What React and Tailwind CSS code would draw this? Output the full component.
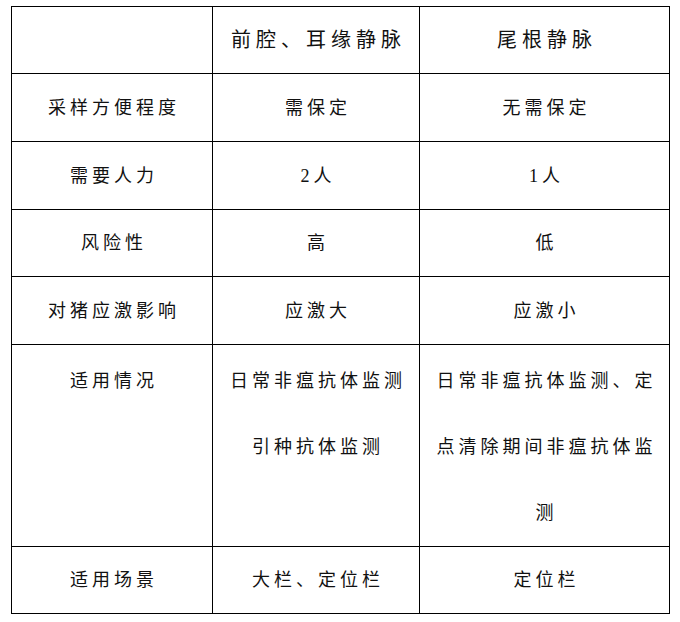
const rows = [
  { label: '采样方便程度', a: ['需保定'], b: ['无需保定'], h: 'h-[68px]' },
  { label: '需要人力', a: ['2人'], b: ['1人'], h: 'h-[68px]' },
  { label: '风险性', a: ['高'], b: ['低'], h: 'h-[67px]' },
  { label: '对猪应激影响', a: ['应激大'], b: ['应激小'], h: 'h-[68px]' },
  {
    label: '适用情况',
    a: ['日常非瘟抗体监测', '引种抗体监测'],
    b: ['日常非瘟抗体监测、定', '点清除期间非瘟抗体监', '测'],
    h: 'h-[201px]',
    top: true,
  },
  { label: '适用场景', a: ['大栏、定位栏'], b: ['定位栏'], h: 'h-[67px]' },
]

const Cell = ({ lines, top, h }) => (
  <td
    className={`border border-black text-center ${h} ${top ? 'align-top pt-[3px]' : 'align-middle'} p-0`}
  >
    {lines.map((line, i) => (
      <div key={i} className="leading-[66px] tracking-[4px] pl-[4px] whitespace-nowrap">
        {line}
      </div>
    ))}
  </td>
)

export default function App() {
  return (
    <div
      className="w-[680px] h-[622px] bg-white pt-[6px] pl-[11px] text-[18px] text-[#111]"
      style={{ fontFamily: '"Liberation Serif", "Noto Sans CJK SC", serif' }}
    >
      <table className="border-collapse table-fixed w-[658px]">
        <colgroup>
          <col className="w-[201px]" />
          <col className="w-[207px]" />
          <col className="w-[250px]" />
        </colgroup>
        <tbody>
          <tr className="h-[67px]">
            <td className="border border-black p-0"></td>
            <td className="border border-black p-0 text-center text-[20px] tracking-[5px] pl-[5px]">前腔、耳缘静脉</td>
            <td className="border border-black p-0 text-center text-[20px] tracking-[5px] pl-[5px]">尾根静脉</td>
          </tr>
          {rows.map((r) => (
            <tr key={r.label} className={r.h}>
              <Cell lines={[r.label]} top={r.top} h={r.h} />
              <Cell lines={r.a} top={r.top} h={r.h} />
              <Cell lines={r.b} top={r.top} h={r.h} />
            </tr>
          ))}
        </tbody>
      </table>
    </div>
  )
}
